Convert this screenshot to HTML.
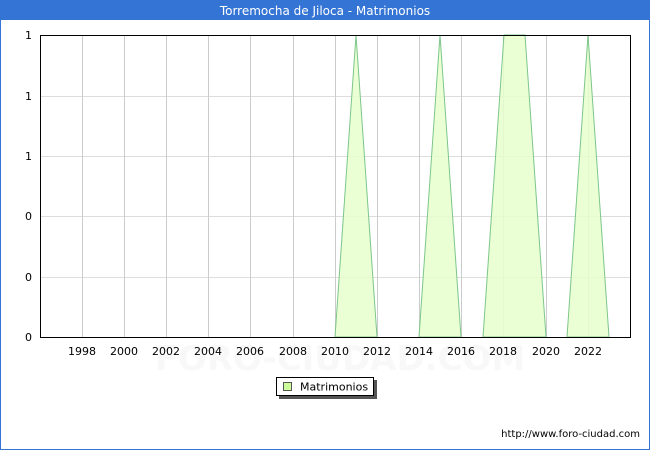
<!DOCTYPE html>
<html><head><style>
body{margin:0;width:650px;height:450px;overflow:hidden;font-family:"DejaVu Sans","Liberation Sans",sans-serif;}
</style></head><body>
<svg width="650" height="450" xmlns="http://www.w3.org/2000/svg" font-family="DejaVu Sans, Liberation Sans, sans-serif">
<rect x="0" y="0" width="650" height="450" fill="#fff"/>
<rect x="0.5" y="0.5" width="649" height="449" fill="none" stroke="#3474d4"/>
<rect x="0" y="0" width="650" height="20" fill="#3474d4"/>
<text x="325" y="15" font-size="12" fill="#fff" text-anchor="middle">Torremocha de Jiloca - Matrimonios</text>
<text x="340" y="370" font-size="34" fill="#f8f8f8" text-anchor="middle" font-weight="bold">FORO-CIUDAD.COM</text>
<g stroke="#ddd" stroke-width="1">
<line x1="40" y1="96.5" x2="630" y2="96.5"/>
<line x1="40" y1="156.5" x2="630" y2="156.5"/>
<line x1="40" y1="216.5" x2="630" y2="216.5"/>
<line x1="40" y1="277.5" x2="630" y2="277.5"/>
</g>
<g stroke="#ccc" stroke-width="1">
<line x1="82.5" y1="35" x2="82.5" y2="337"/><line x1="124.5" y1="35" x2="124.5" y2="337"/>
<line x1="166.5" y1="35" x2="166.5" y2="337"/><line x1="208.5" y1="35" x2="208.5" y2="337"/>
<line x1="250.5" y1="35" x2="250.5" y2="337"/><line x1="293.5" y1="35" x2="293.5" y2="337"/>
<line x1="335.5" y1="35" x2="335.5" y2="337"/><line x1="377.5" y1="35" x2="377.5" y2="337"/>
<line x1="419.5" y1="35" x2="419.5" y2="337"/><line x1="461.5" y1="35" x2="461.5" y2="337"/>
<line x1="503.5" y1="35" x2="503.5" y2="337"/><line x1="546.5" y1="35" x2="546.5" y2="337"/>
<line x1="588.5" y1="35" x2="588.5" y2="337"/>
</g>
<g fill="#e6ffcc" fill-opacity="0.85" stroke="#7cc68a" stroke-width="1">
<polygon points="335,337 356,35 377,337"/>
<polygon points="419,337 440,35 461,337"/>
<polygon points="483,337 504,35 525,35 546,337"/>
<polygon points="567,337 588,35 609,337"/>
</g>
<rect x="40.5" y="35.5" width="590" height="302" fill="none" stroke="#000"/>
<g font-size="11" fill="#000" text-anchor="end">
<text x="32" y="39">1</text><text x="32" y="100">1</text><text x="32" y="160">1</text>
<text x="32" y="220">0</text><text x="32" y="281">0</text><text x="32" y="341">0</text>
</g>
<g font-size="11" fill="#000" text-anchor="middle">
<text x="82" y="355">1998</text><text x="124" y="355">2000</text><text x="166" y="355">2002</text>
<text x="208" y="355">2004</text><text x="250" y="355">2006</text><text x="293" y="355">2008</text>
<text x="335" y="355">2010</text><text x="377" y="355">2012</text><text x="419" y="355">2014</text>
<text x="461" y="355">2016</text><text x="503" y="355">2018</text><text x="546" y="355">2020</text>
<text x="588" y="355">2022</text>
</g>
<rect x="279" y="380" width="98" height="19" fill="#555"/>
<rect x="276.5" y="377.5" width="97" height="18" fill="#fff" stroke="#000"/>
<rect x="283.5" y="382.5" width="8" height="8" fill="#ccff99" stroke="#555"/>
<text x="300" y="390.5" font-size="11" fill="#000">Matrimonios</text>
<text x="640" y="437" font-size="10" fill="#000" text-anchor="end">http://www.foro-ciudad.com</text>
</svg>
</body></html>
